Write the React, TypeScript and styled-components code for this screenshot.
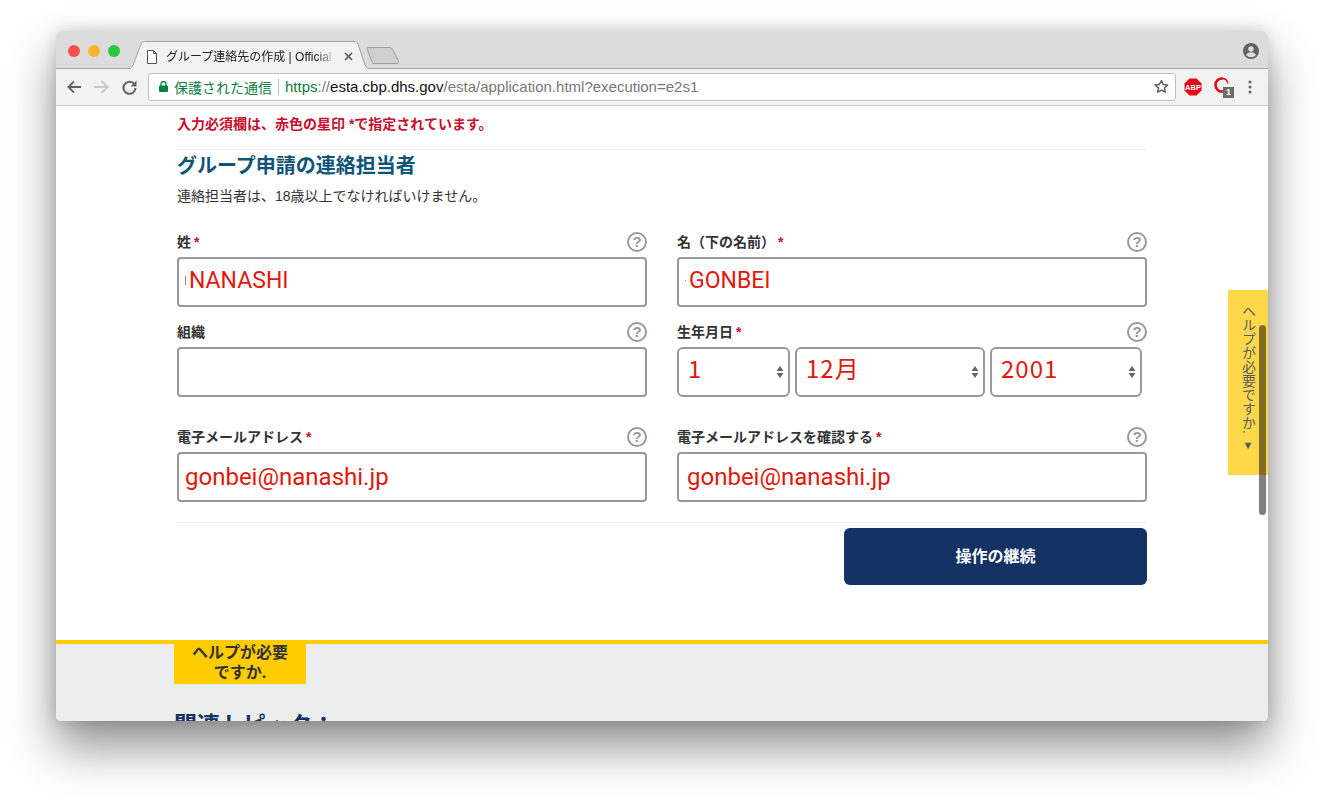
import styled, { createGlobalStyle } from "styled-components";

const GlobalStyle = createGlobalStyle`
  html, body {
    margin: 0;
    padding: 0;
    background: #fff;
  }
  * {
    box-sizing: border-box;
  }
`;

const jpFont = `"Liberation Sans", "Noto Sans CJK JP", sans-serif`;
const fieldFont = `Roboto, "Noto Sans CJK JP", sans-serif`;

const Desktop = styled.div`
  width: 1324px;
  height: 801px;
  padding: 31px 56px 0;
  overflow: hidden;
  background: #fff;
  font-family: ${jpFont};
`;

const Window = styled.div`
  width: 1212px;
  height: 690px;
  display: flex;
  flex-direction: column;
  border-radius: 6px 6px 5px 5px;
  overflow: hidden;
  box-shadow: 0 26px 48px rgba(0, 0, 0, 0.44), 0 0 16px rgba(0, 0, 0, 0.16);
`;

const TabStrip = styled.div`
  height: 38px;
  flex: none;
  display: flex;
  align-items: flex-end;
  padding: 0 9px 0 12px;
  background: #dcdcdc;
  border-bottom: 1px solid #a3a3a3;
`;

const Lights = styled.div`
  display: flex;
  gap: 8px;
  align-self: flex-start;
  margin-top: 14px;
`;

const Light = styled.span<{ $color: string }>`
  width: 12px;
  height: 12px;
  border-radius: 50%;
  background: ${(p) => p.$color};
`;

const Tab = styled.div`
  position: relative;
  width: 242px;
  height: 28px;
  margin: 0 0 -1px 8px;
  padding: 3px 0 0 19px;
  display: flex;
  align-items: center;
`;

const TabShape = styled.svg`
  position: absolute;
  left: 0;
  top: 0;
`;

const TabIcon = styled.svg`
  position: relative;
  flex: none;
`;

const TabTitle = styled.div`
  position: relative;
  width: 170px;
  margin-left: 9px;
  font-size: 12px;
  line-height: 16px;
  white-space: nowrap;
  overflow: hidden;
  color: #222;
  -webkit-mask-image: linear-gradient(to right, #000 150px, transparent 170px);
  mask-image: linear-gradient(to right, #000 150px, transparent 170px);
`;

const TabClose = styled.svg`
  position: relative;
  margin-left: 8px;
`;

const NewTab = styled.svg`
  margin: 0 0 4px -4px;
`;

const Profile = styled.svg`
  margin: 0 0 9px auto;
`;

const Toolbar = styled.div`
  height: 37px;
  flex: none;
  display: flex;
  align-items: center;
  padding-left: 11px;
  background: #f2f2f2;
  border-bottom: 1px solid #cfcfcf;
`;

const NavIcon = styled.svg<{ $gap: number }>`
  flex: none;
  margin-right: ${(p) => p.$gap}px;
`;

const Omnibox = styled.div`
  width: 1028px;
  height: 28px;
  flex: none;
  display: flex;
  align-items: center;
  padding: 0 6px 1px 10px;
  background: #fff;
  border: 1px solid #bfbfbf;
  border-radius: 3px;
  font-size: 15px;
  white-space: nowrap;
`;

const Secure = styled.span`
  margin-left: 6px;
  font-size: 14px;
  color: #0b8043;
`;

const Divider = styled.span`
  width: 1px;
  height: 16px;
  margin: 0 6px;
  background: #bbb;
`;

const UrlPart = styled.span<{ $color: string }>`
  color: ${(p) => p.$color};
`;

const Star = styled.svg`
  margin-left: auto;
`;

const Extensions = styled.div`
  display: flex;
  align-items: center;
  margin-left: 8px;
`;

const OperaWrap = styled.div`
  position: relative;
  width: 16px;
  height: 21px;
  margin: 0 18px 0 12px;
`;

const Badge = styled.span`
  position: absolute;
  right: -4px;
  bottom: 0;
  width: 11px;
  height: 11px;
  background: #6a6d70;
  color: #fff;
  font-size: 9px;
  line-height: 11px;
  font-weight: 700;
  text-align: center;
`;

const Page = styled.div`
  position: relative;
  flex: 1;
  min-height: 0;
  overflow: hidden;
  background: #fff;
`;

const Main = styled.main`
  width: 1091px;
  height: 534px;
  padding-left: 121px;
`;

const Note = styled.p`
  height: 44px;
  margin: 0;
  padding-top: 9px;
  font-size: 14px;
  line-height: 18px;
  font-weight: 700;
  color: #c8102e;
  border-bottom: 1px solid #eeeeee;
`;

const Heading = styled.h2`
  margin: 1px 0 0;
  height: 30px;
  font-size: 20px;
  line-height: 30px;
  font-weight: 700;
  color: #0f5578;
`;

const Sub = styled.p`
  margin: 5px 0 0;
  height: 20px;
  font-size: 14px;
  line-height: 20px;
  color: #333;
`;

const FormRow = styled.div<{ $top: number }>`
  display: grid;
  grid-template-columns: 470px 470px;
  column-gap: 30px;
  margin-top: ${(p) => p.$top}px;
`;

const Field = styled.div`
  display: flex;
  flex-direction: column;
  gap: 5px;
`;

const LabelRow = styled.div`
  height: 20px;
  display: flex;
  align-items: center;
  justify-content: space-between;
`;

const Label = styled.label`
  padding-bottom: 3px;
  font-size: 14px;
  font-weight: 700;
  color: #333;
`;

const Required = styled.span`
  margin-left: 3px;
  color: #c8102e;
`;

const Help = styled.span`
  width: 20px;
  height: 20px;
  border: 2px solid #999;
  border-radius: 50%;
  color: #999;
  font-size: 15px;
  line-height: 16px;
  font-weight: 700;
  text-align: center;
`;

const TextBox = styled.div<{ $inset?: number; $email?: boolean }>`
  position: relative;
  height: 50px;
  display: flex;
  align-items: center;
  padding: 0 6px ${(p) => (p.$email ? 0 : 4)}px ${(p) => p.$inset ?? 6}px;
  background: #fff;
  border: 2px solid #999;
  border-radius: 4px;
  font-family: ${fieldFont};
  font-size: ${(p) => (p.$email ? 24 : 23)}px;
  color: #e2180c;
  white-space: nowrap;
`;

const CaretMark = styled.span<{ $h: number; $w: number }>`
  width: ${(p) => p.$w}px;
  height: ${(p) => p.$h}px;
  margin-right: 3px;
  background: #888;
`;

const SelectRow = styled.div`
  display: flex;
  gap: 5px;
`;

const Select = styled.div<{ $w: number }>`
  position: relative;
  width: ${(p) => p.$w}px;
  height: 50px;
  display: flex;
  align-items: center;
  padding: 0 0 9px 9px;
  background: #fff;
  border: 2px solid #999;
  border-radius: 6px;
  font-family: "Noto Sans CJK JP", sans-serif;
  font-size: 24px;
  letter-spacing: 1px;
  color: #e2180c;
`;

const Arrows = styled.svg`
  position: absolute;
  right: 4px;
  top: 16px;
`;

const Rule = styled.div`
  height: 1px;
  margin-top: 20px;
  width: 970px;
  background: #eeeeee;
`;

const Actions = styled.div`
  width: 970px;
  display: flex;
  justify-content: flex-end;
  margin-top: 5px;
`;

const PrimaryButton = styled.button`
  width: 303px;
  height: 57px;
  padding: 0 0 4px;
  border: 0;
  border-radius: 6px;
  background: #153264;
  color: #fff;
  font-family: ${jpFont};
  font-size: 16px;
  font-weight: 700;
`;

const Footer = styled.footer`
  height: 81px;
  padding-left: 118px;
  background: #eceeee;
  border-top: 4px solid #ffcc00;
`;

const HelpTag = styled.div`
  width: 132px;
  height: 40px;
  padding: 0 14px;
  background: #ffcc00;
  color: #333;
  font-size: 16px;
  line-height: 20px;
  font-weight: 700;
  text-align: center;
`;

const HelpTagText = styled.span`
  display: block;
  transform: translateY(-1px);
`;

const Topics = styled.h3`
  margin: 26px 0 0;
  font-size: 23px;
  line-height: 30px;
  font-weight: 700;
  color: #153264;
  white-space: nowrap;
`;

const SideTab = styled.div`
  position: absolute;
  right: 0;
  top: 184px;
  width: 40px;
  height: 185px;
  display: flex;
  align-items: center;
  justify-content: flex-start;
  gap: 5px;
  padding: 14px 0 0 0;
  background: #ffd84a;
  color: #555b66;
  font-size: 14px;
  writing-mode: vertical-rl;
  white-space: nowrap;
`;

const SideArrow = styled.span`
  font-size: 11px;
`;

const ScrollThumb = styled.div`
  position: absolute;
  right: 2px;
  top: 219px;
  width: 7px;
  height: 190px;
  border-radius: 4px;
  background: rgba(0, 0, 0, 0.5);
`;

const ICON_GREY = "#5f6368";

const HelpMark = () => <Help>?</Help>;

const SelectArrows = () => (
  <Arrows width="8" height="14" viewBox="0 0 8 14">
    <path d="M4 1 7.500 6h-7zM4 13 .5 8h7z" fill="#666" />
  </Arrows>
);

const App = () => {
  return (
    <Desktop>
      <GlobalStyle />
      <Window>
        <TabStrip>
          <Lights>
            <Light $color="#fa5049" />
            <Light $color="#fbb429" />
            <Light $color="#2bc73f" />
          </Lights>
          <Tab>
            <TabShape width="242" height="28" viewBox="0 0 242 28">
              <path d="M0 27.500h1c2 0 3-1 4-3L13 3c.8-1.700 1.700-2.500 3.500-2.500h210c1.800 0 2.700.8 3.500 2.500l7 21c1 2 2 3.500 4 3.500h1" fill="#f2f2f2" stroke="#a3a3a3" />
              <rect x="3" y="27" width="236" height="2" fill="#f2f2f2" />
            </TabShape>
            <TabIcon width="10" height="14" viewBox="0 0 10 14">
              <path d="M.5.5h6l3 3v10h-9zM6.500.5v3h3" fill="#fff" stroke="#555" />
            </TabIcon>
            <TabTitle>グループ連絡先の作成 | Official ESTA</TabTitle>
            <TabClose width="9" height="9" viewBox="0 0 9 9">
              <path d="M1 1l7 7M8 1 1 8" stroke="#555" strokeWidth="1.600" />
            </TabClose>
          </Tab>
          <NewTab width="34" height="17" viewBox="0 0 34 17">
            <path d="M1 1.500c0-.6.4-1 1-1h22c1 0 1.500.4 2 1.200l6.500 12c.5 1 0 2.800-1.500 2.800H8c-1 0-1.600-.4-2-1.200z" fill="#cfcfcf" stroke="#a0a0a0" />
          </NewTab>
          <Profile width="16" height="16" viewBox="0 0 16 16">
            <circle cx="8" cy="8" r="8" fill={ICON_GREY} />
            <circle cx="8" cy="6" r="2.700" fill="#dcdcdc" />
            <path d="M3 12c1-2 3-2.700 5-2.700s4 .7 5 2.700a6.500 6.500 0 0 1-10 0z" fill="#dcdcdc" />
          </Profile>
        </TabStrip>
        <Toolbar>
          <NavIcon $gap={11} width="15" height="14" viewBox="0 0 16 14">
            <path d="M15 7H2M7.500 1 1.500 7l6 6" fill="none" stroke={ICON_GREY} strokeWidth="2" />
          </NavIcon>
          <NavIcon $gap={13} width="16" height="14" viewBox="0 0 16 14">
            <path d="M1 7h13M8.500 1l6 6-6 6" fill="none" stroke="#c9c9c9" strokeWidth="2" />
          </NavIcon>
          <NavIcon $gap={11} width="15" height="15" viewBox="0 0 15 15">
            <path d="M12.500 4.500A6 6 0 1 0 13.500 8" fill="none" stroke={ICON_GREY} strokeWidth="2" />
            <path d="M14.500.5v6h-6z" fill={ICON_GREY} />
          </NavIcon>
          <Omnibox>
            <svg width="9" height="11" viewBox="0 0 9 11">
              <path d="M2 5V3a2.500 2.500 0 0 1 5 0v2" fill="none" stroke="#0b8043" strokeWidth="1.300" />
              <rect y="4.500" width="9" height="6.500" rx="1" fill="#0b8043" />
            </svg>
            <Secure>保護された通信</Secure>
            <Divider />
            <UrlPart $color="#0b8043">https</UrlPart>
            <UrlPart $color="#777">://</UrlPart>
            <UrlPart $color="#111">esta.cbp.dhs.gov</UrlPart>
            <UrlPart $color="#777">/esta/application.html?execution=e2s1</UrlPart>
            <Star width="15" height="15" viewBox="0 0 24 24">
              <path d="M12 2.500l2.900 6.300 6.900.8-5.100 4.700 1.400 6.800-6.100-3.400-6.100 3.400 1.400-6.800L1.400 9.600l6.900-.8z" fill="none" stroke={ICON_GREY} strokeWidth="2.400" strokeLinejoin="round" />
            </Star>
          </Omnibox>
          <Extensions>
            <svg width="18" height="18" viewBox="0 0 18 18">
              <path d="M5.500.5h7l5 5v7l-5 5h-7l-5-5v-7z" fill="#e30613" />
              <text x="9" y="11.800" fontSize="7.500" fontWeight="700" fill="#fff" textAnchor="middle" fontFamily="Liberation Sans">ABP</text>
            </svg>
            <OperaWrap>
              <svg width="15" height="16" viewBox="0 0 15 16">
                <path d="M9 1.500C4.800 1 1.500 3.800 1.500 8s3.300 7 7.500 6.500" fill="none" stroke="#e30613" strokeWidth="2.600" />
                <path d="M9 1.500c2.700.3 4.500 2.500 4.800 5" fill="none" stroke="#e30613" strokeWidth="1.500" />
              </svg>
              <Badge>1</Badge>
            </OperaWrap>
            <svg width="4" height="14" viewBox="0 0 4 14">
              <circle cx="2" cy="2" r="1.500" fill={ICON_GREY} />
              <circle cx="2" cy="7" r="1.500" fill={ICON_GREY} />
              <circle cx="2" cy="12" r="1.500" fill={ICON_GREY} />
            </svg>
          </Extensions>
        </Toolbar>
        <Page>
          <Main>
            <Note>入力必須欄は、赤色の星印 *で指定されています。</Note>
            <Heading>グループ申請の連絡担当者</Heading>
            <Sub>連絡担当者は、18歳以上でなければいけません。</Sub>
            <FormRow $top={26}>
              <Field>
                <LabelRow>
                  <Label>
                    姓<Required>*</Required>
                  </Label>
                  <HelpMark />
                </LabelRow>
                <TextBox>
                  <CaretMark $w={1} $h={9} />
                  NANASHI
                </TextBox>
              </Field>
              <Field>
                <LabelRow>
                  <Label>
                    名（下の名前）<Required>*</Required>
                  </Label>
                  <HelpMark />
                </LabelRow>
                <TextBox>
                  <CaretMark $w={1} $h={1} />
                  GONBEI
                </TextBox>
              </Field>
            </FormRow>
            <FormRow $top={15}>
              <Field>
                <LabelRow>
                  <Label>組織</Label>
                  <HelpMark />
                </LabelRow>
                <TextBox />
              </Field>
              <Field>
                <LabelRow>
                  <Label>
                    生年月日<Required>*</Required>
                  </Label>
                  <HelpMark />
                </LabelRow>
                <SelectRow>
                  <Select $w={113}>
                    1
                    <SelectArrows />
                  </Select>
                  <Select $w={190}>
                    12月
                    <SelectArrows />
                  </Select>
                  <Select $w={152}>
                    2001
                    <SelectArrows />
                  </Select>
                </SelectRow>
              </Field>
            </FormRow>
            <FormRow $top={30}>
              <Field>
                <LabelRow>
                  <Label>
                    電子メールアドレス<Required>*</Required>
                  </Label>
                  <HelpMark />
                </LabelRow>
                <TextBox $email>gonbei@nanashi.jp</TextBox>
              </Field>
              <Field>
                <LabelRow>
                  <Label>
                    電子メールアドレスを確認する<Required>*</Required>
                  </Label>
                  <HelpMark />
                </LabelRow>
                <TextBox $email $inset={8}>gonbei@nanashi.jp</TextBox>
              </Field>
            </FormRow>
            <Rule />
            <Actions>
              <PrimaryButton>操作の継続</PrimaryButton>
            </Actions>
          </Main>
          <Footer>
            <HelpTag>
              <HelpTagText>ヘルプが必要ですか.</HelpTagText>
            </HelpTag>
            <Topics>関連トピック：</Topics>
          </Footer>
          <SideTab>
            ヘルプが必要ですか.
            <SideArrow>▼</SideArrow>
          </SideTab>
          <ScrollThumb />
        </Page>
      </Window>
    </Desktop>
  );
};

export default App;
